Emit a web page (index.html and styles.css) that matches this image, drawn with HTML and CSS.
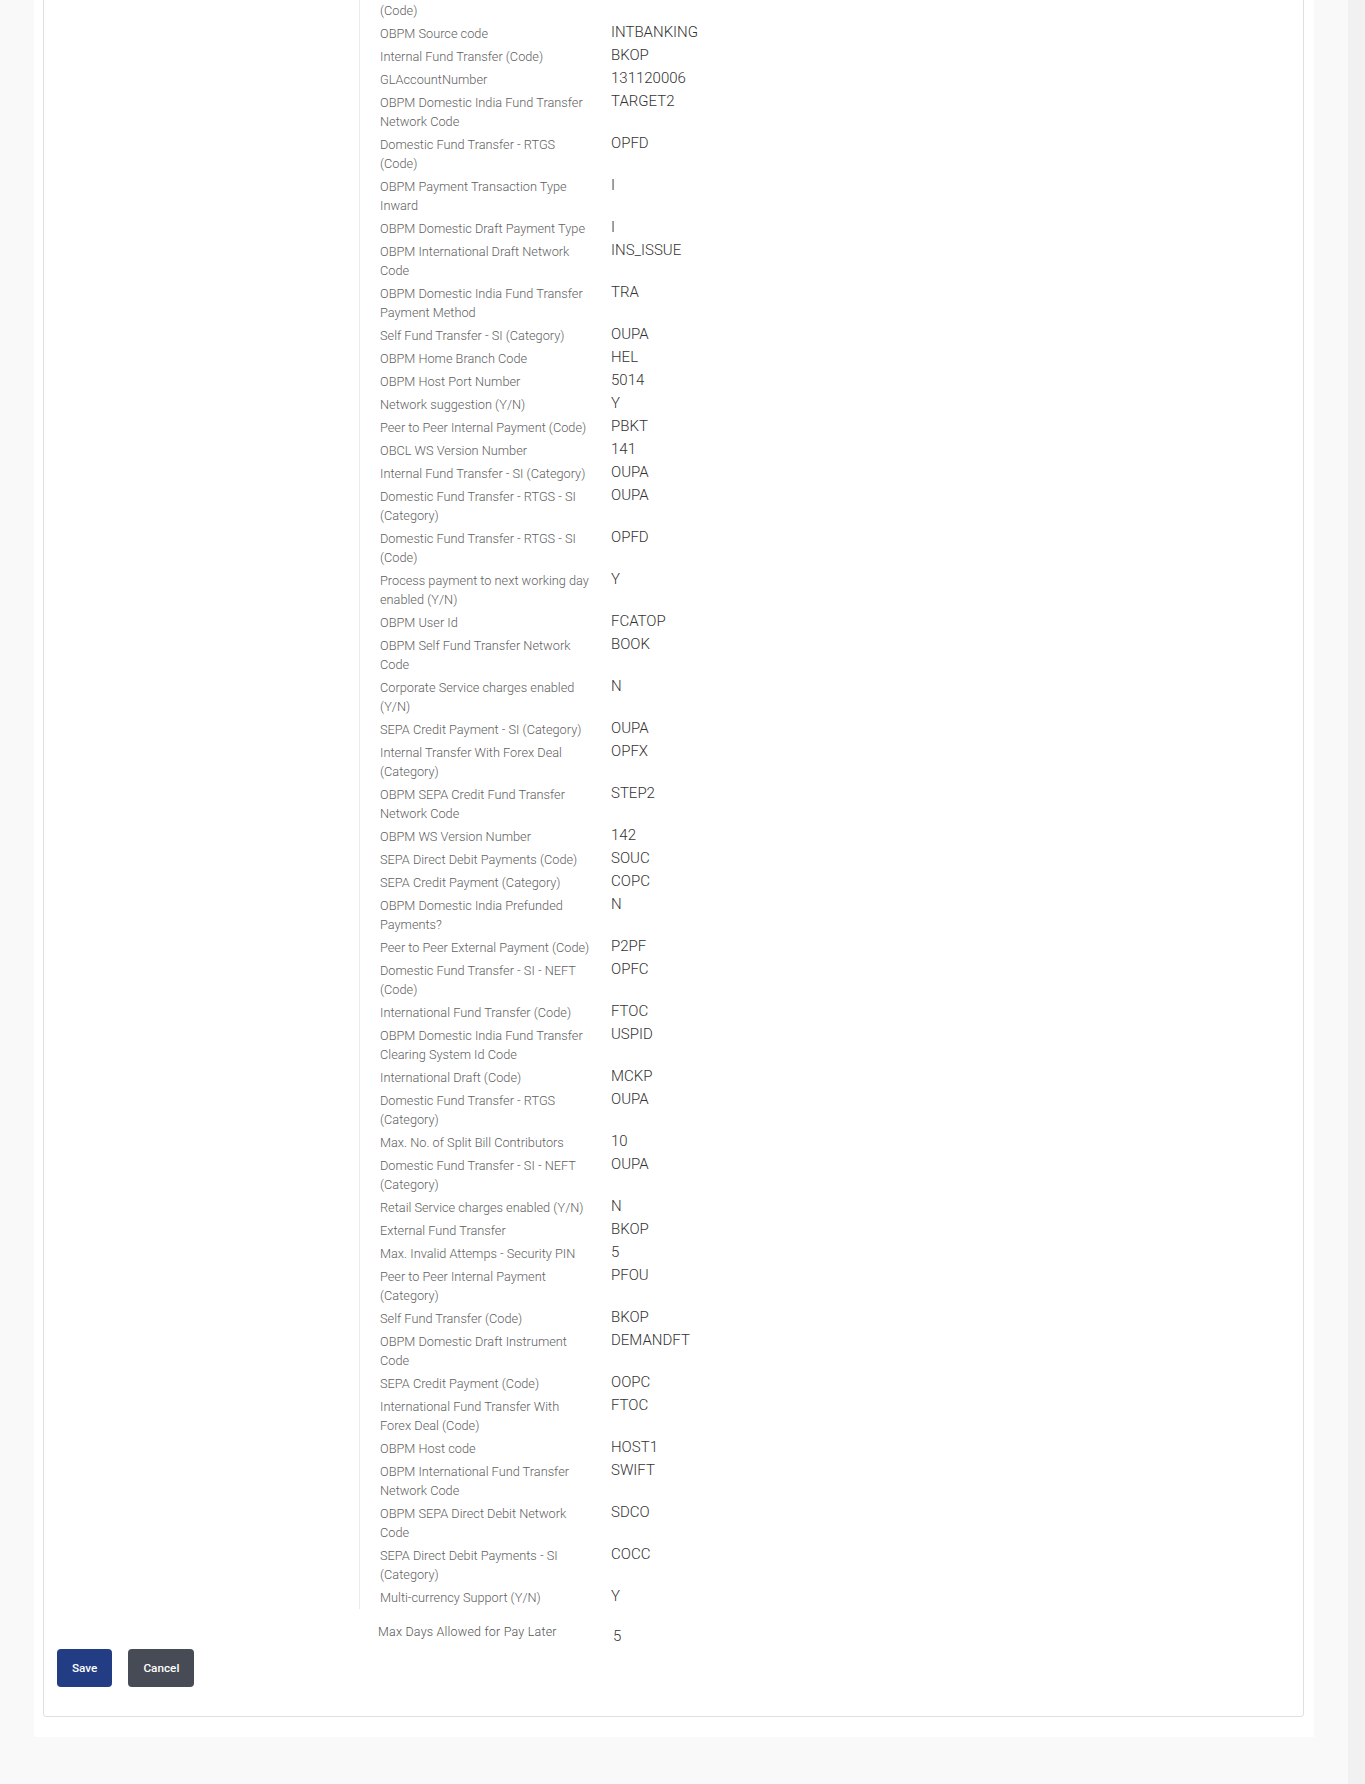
FILE: index.html
```html
<!DOCTYPE html>
<html lang="en">
<head>
<meta charset="utf-8">
<title>System Configuration</title>
<link rel="stylesheet" href="styles.css">
</head>
<body>
<div class="page">
  <main class="main">
    <section class="panel">
      <div class="card">
        <div class="details">
          <div class="row"><div class="lbl">(Code)</div><div class="val"></div></div>
          <div class="row"><div class="lbl">OBPM Source code</div><div class="val">INTBANKING</div></div>
          <div class="row"><div class="lbl">Internal Fund Transfer (Code)</div><div class="val">BKOP</div></div>
          <div class="row"><div class="lbl">GLAccountNumber</div><div class="val">131120006</div></div>
          <div class="row"><div class="lbl">OBPM Domestic India Fund Transfer Network Code</div><div class="val">TARGET2</div></div>
          <div class="row"><div class="lbl">Domestic Fund Transfer - RTGS (Code)</div><div class="val">OPFD</div></div>
          <div class="row"><div class="lbl">OBPM Payment Transaction Type Inward</div><div class="val">I</div></div>
          <div class="row"><div class="lbl">OBPM Domestic Draft Payment Type</div><div class="val">I</div></div>
          <div class="row"><div class="lbl">OBPM International Draft Network Code</div><div class="val">INS_ISSUE</div></div>
          <div class="row"><div class="lbl">OBPM Domestic India Fund Transfer Payment Method</div><div class="val">TRA</div></div>
          <div class="row"><div class="lbl">Self Fund Transfer - SI (Category)</div><div class="val">OUPA</div></div>
          <div class="row"><div class="lbl">OBPM Home Branch Code</div><div class="val">HEL</div></div>
          <div class="row"><div class="lbl">OBPM Host Port Number</div><div class="val">5014</div></div>
          <div class="row"><div class="lbl">Network suggestion (Y/N)</div><div class="val">Y</div></div>
          <div class="row"><div class="lbl">Peer to Peer Internal Payment (Code)</div><div class="val">PBKT</div></div>
          <div class="row"><div class="lbl">OBCL WS Version Number</div><div class="val">141</div></div>
          <div class="row"><div class="lbl">Internal Fund Transfer - SI (Category)</div><div class="val">OUPA</div></div>
          <div class="row"><div class="lbl">Domestic Fund Transfer - RTGS - SI (Category)</div><div class="val">OUPA</div></div>
          <div class="row"><div class="lbl">Domestic Fund Transfer - RTGS - SI (Code)</div><div class="val">OPFD</div></div>
          <div class="row"><div class="lbl">Process payment to next working day enabled (Y/N)</div><div class="val">Y</div></div>
          <div class="row"><div class="lbl">OBPM User Id</div><div class="val">FCATOP</div></div>
          <div class="row"><div class="lbl">OBPM Self Fund Transfer Network Code</div><div class="val">BOOK</div></div>
          <div class="row"><div class="lbl">Corporate Service charges enabled (Y/N)</div><div class="val">N</div></div>
          <div class="row"><div class="lbl">SEPA Credit Payment - SI (Category)</div><div class="val">OUPA</div></div>
          <div class="row"><div class="lbl">Internal Transfer With Forex Deal (Category)</div><div class="val">OPFX</div></div>
          <div class="row"><div class="lbl">OBPM SEPA Credit Fund Transfer Network Code</div><div class="val">STEP2</div></div>
          <div class="row"><div class="lbl">OBPM WS Version Number</div><div class="val">142</div></div>
          <div class="row"><div class="lbl">SEPA Direct Debit Payments (Code)</div><div class="val">SOUC</div></div>
          <div class="row"><div class="lbl">SEPA Credit Payment (Category)</div><div class="val">COPC</div></div>
          <div class="row"><div class="lbl">OBPM Domestic India Prefunded Payments?</div><div class="val">N</div></div>
          <div class="row"><div class="lbl">Peer to Peer External Payment (Code)</div><div class="val">P2PF</div></div>
          <div class="row"><div class="lbl">Domestic Fund Transfer - SI - NEFT (Code)</div><div class="val">OPFC</div></div>
          <div class="row"><div class="lbl">International Fund Transfer (Code)</div><div class="val">FTOC</div></div>
          <div class="row"><div class="lbl">OBPM Domestic India Fund Transfer Clearing System Id Code</div><div class="val">USPID</div></div>
          <div class="row"><div class="lbl">International Draft (Code)</div><div class="val">MCKP</div></div>
          <div class="row"><div class="lbl">Domestic Fund Transfer - RTGS (Category)</div><div class="val">OUPA</div></div>
          <div class="row"><div class="lbl">Max. No. of Split Bill Contributors</div><div class="val">10</div></div>
          <div class="row"><div class="lbl">Domestic Fund Transfer - SI - NEFT (Category)</div><div class="val">OUPA</div></div>
          <div class="row"><div class="lbl">Retail Service charges enabled (Y/N)</div><div class="val">N</div></div>
          <div class="row"><div class="lbl">External Fund Transfer</div><div class="val">BKOP</div></div>
          <div class="row"><div class="lbl">Max. Invalid Attemps - Security PIN</div><div class="val">5</div></div>
          <div class="row"><div class="lbl">Peer to Peer Internal Payment (Category)</div><div class="val">PFOU</div></div>
          <div class="row"><div class="lbl">Self Fund Transfer (Code)</div><div class="val">BKOP</div></div>
          <div class="row"><div class="lbl">OBPM Domestic Draft Instrument Code</div><div class="val">DEMANDFT</div></div>
          <div class="row"><div class="lbl">SEPA Credit Payment (Code)</div><div class="val">OOPC</div></div>
          <div class="row"><div class="lbl">International Fund Transfer With Forex Deal (Code)</div><div class="val">FTOC</div></div>
          <div class="row"><div class="lbl">OBPM Host code</div><div class="val">HOST1</div></div>
          <div class="row"><div class="lbl">OBPM International Fund Transfer Network Code</div><div class="val">SWIFT</div></div>
          <div class="row"><div class="lbl">OBPM SEPA Direct Debit Network Code</div><div class="val">SDCO</div></div>
          <div class="row"><div class="lbl">SEPA Direct Debit Payments - SI (Category)</div><div class="val">COCC</div></div>
          <div class="row"><div class="lbl">Multi-currency Support (Y/N)</div><div class="val">Y</div></div>
        </div>
        <div class="extra">
          <div class="extra-lbl">Max Days Allowed for Pay Later</div>
          <div class="extra-val">5</div>
        </div>
        <div class="actions">
          <button class="btn btn-primary" type="button">Save</button>
          <button class="btn btn-secondary" type="button">Cancel</button>
        </div>
      </div>
    </section>
  </main>
  <div class="scroll-track"></div>
</div>
</body>
</html>
```
FILE: styles.css
```css
* { box-sizing: border-box; }

html, body {
  margin: 0;
  padding: 0;
}

body {
  font-family: Roboto, "Liberation Sans", Arial, sans-serif;
  background: #f9f9f9;
  overflow: hidden;
}

.page {
  display: flex;
  min-height: 100vh;
}

.main {
  flex: 1;
  background: #f9f9f9;
}

.scroll-track {
  width: 17px;
  flex: 0 0 17px;
  background: #f1f1f1;
}

.panel {
  margin: -40px 34px 0 34px;
  padding: 0 10px 20px 9px;
  background: #ffffff;
}

.card {
  border: 1px solid #e0e0e0;
  border-radius: 3px;
  background: #ffffff;
  padding: 38px 13px 29px 13px;
}

.details {
  margin-left: 302px;
  border-left: 1px solid #ebebeb;
  padding-left: 20px;
}

.row {
  display: grid;
  grid-template-columns: 231px 1fr;
  padding: 2px 0;
}

.lbl {
  padding-right: 20px;
  font-size: 12.75px;
  line-height: 19px;
  font-weight: 300;
  color: #5f5f5f;
}

.val {
  font-size: 15px;
  line-height: 16px;
  font-weight: 300;
  color: #333333;
}

.extra {
  display: grid;
  grid-template-columns: 235px 1fr;
  margin: 13px 0 0 321px;
}

.extra-lbl {
  font-size: 12.5px;
  line-height: 19px;
  letter-spacing: 0.2px;
  font-weight: 300;
  color: #555555;
}

.extra-val {
  padding-top: 5px;
  font-size: 15px;
  line-height: 19px;
  font-weight: 300;
  color: #333333;
}

.actions {
  display: flex;
  gap: 16px;
  margin-top: 3px;
}

.btn {
  height: 38px;
  padding: 0 15px;
  border: 0;
  border-radius: 4px;
  font-family: Roboto, "Liberation Sans", Arial, sans-serif;
  font-size: 11.75px;
  font-weight: 500;
  color: #ffffff;
  cursor: pointer;
}

.btn-primary { background: #233d85; }
.btn-secondary { background: #474b55; }
```
